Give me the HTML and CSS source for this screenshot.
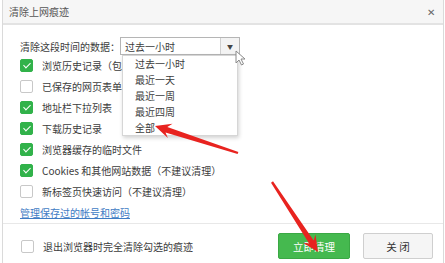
FILE: index.html
```html
<!DOCTYPE html>
<html>
    <head>
        <title>清除上网痕迹</title>
        <link rel="stylesheet" href="styles.css">
    </head>
    <body>
        <div class="dialog">
            <div class="title_bar">
                <span class="title">清除上网痕迹</span>
                <span class="close">&#x2715;</span>
            </div>
            <div class="content">
                <div class="range_row">
                    <span class="range_label">清除这段时间的数据：</span>
                    <div class="select">
                        <span class="select_text">过去一小时</span>
                        <span class="select_btn">&#x25BC;</span>
                    </div>
                </div>
                <div class="check_row"><span class="box on"></span>浏览历史记录（包括地址栏输入记录）</div>
                <div class="check_row"><span class="box"></span>已保存的网页表单单数据</div>
                <div class="check_row"><span class="box on"></span>地址栏下拉列表</div>
                <div class="check_row"><span class="box on"></span>下载历史记录</div>
                <div class="check_row"><span class="box on"></span>浏览器缓存的临时文件</div>
                <div class="check_row"><span class="box on"></span>Cookies 和其他网站数据（不建议清理）</div>
                <div class="check_row"><span class="box"></span>新标签页快速访问（不建议清理）</div>
                <div class="link_row"><a class="link" href="#">管理保存过的帐号和密码</a></div>
            </div>
            <div class="footer">
                <div class="check_row"><span class="box"></span>退出浏览器时完全清除勾选的痕迹</div>
                <div class="buttons">
                    <span class="btn btn_green">立即清理</span>
                    <span class="btn btn_gray">关 闭</span>
                </div>
            </div>
        </div>

        <!-- open dropdown list -->
        <div class="dropdown">
            <div class="item">过去一小时</div>
            <div class="item">最近一天</div>
            <div class="item">最近一周</div>
            <div class="item">最近四周</div>
            <div class="item">全部</div>
        </div>

        <svg class="cursor" width="12" height="16" viewBox="0 0 12 16">
            <path d="M1 1 L1 13 L4 10 L6.5 15 L8.5 14 L6 9 L10 9 Z" fill="#fff" stroke="#8a8a8a" stroke-width="1"/>
        </svg>

        <svg class="arrows" width="445" height="263" viewBox="0 0 445 263">
            <polygon fill="#e8231f" points="155,126 172.5,123.8 167.3,127 238.4,151.9 237.6,154.1 165.5,132.4 167.9,138"/>
            <polygon fill="#e8231f" points="318,252 315.5,234.5 313.7,240.5 273,181.3 271,182.7 309.1,243.5 302.9,242.7"/>
        </svg>
    </body>
</html>
```

FILE: styles.css
```css
html, body {
	margin: 0;
	padding: 0;
}
body {
	width: 445px;
	height: 263px;
	overflow: hidden;
	background: #fff;
	position: relative;
	font-family: "Noto Sans CJK SC", "Microsoft YaHei", sans-serif;
	font-size: 10px;
	color: #3c3c3c;
}
.dialog {
	margin: 0 1px 0 2px;
	border-left: 1px solid #dadada;
	border-right: 1px solid #dadada;
	height: 263px;
	box-sizing: border-box;
}
.title_bar {
	height: 23px;
	background: #f6f6f6;
	border-bottom: 2px solid #e3e3e3;
	display: flex;
	align-items: center;
	justify-content: space-between;
	padding: 0 8px 0 6px;
}
.title {
	color: #555;
}
.close {
	color: #666;
	font-size: 10px;
}
.content {
	padding: 12px 0 0 17px;
}
.range_row {
	display: flex;
	align-items: center;
	height: 18px;
}
.range_label {
	width: 100px;
}
.select {
	width: 118px;
	height: 16px;
	border: 1px solid #b5b5b5;
	display: flex;
	align-items: center;
	justify-content: space-between;
}
.select_text {
	padding-left: 4px;
}
.select_btn {
	width: 18px;
	height: 16px;
	border-left: 1px solid #d0d0d0;
	background: #f3f3f3;
	font-size: 6px;
	color: #444;
	display: flex;
	align-items: center;
	justify-content: center;
}
.check_row {
	height: 21px;
	display: flex;
	align-items: center;
	white-space: nowrap;
}
.box {
	width: 13px;
	height: 13px;
	box-sizing: border-box;
	border: 1px solid #c8c8c8;
	border-radius: 2px;
	background: #fff;
	margin-right: 9px;
	position: relative;
}
.box.on {
	background: #31b24a;
	border-color: #31b24a;
}
.box.on::after {
	content: "";
	position: absolute;
	left: 3.5px;
	top: 1px;
	width: 3px;
	height: 6px;
	border-right: 1.5px solid #fff;
	border-bottom: 1.5px solid #fff;
	transform: rotate(45deg);
}
.link_row {
	height: 21px;
	display: flex;
	align-items: center;
}
.link {
	color: #3f7cc4;
	text-decoration: underline;
}
.footer {
	border-top: 1px solid #e8e8e8;
	padding: 9px 10px 0 18px;
	display: flex;
	justify-content: space-between;
}
.footer .check_row {
	height: 26px;
}
.buttons {
	display: flex;
	gap: 13px;
}
.btn {
	width: 72px;
	height: 26px;
	box-sizing: border-box;
	border-radius: 2px;
	display: flex;
	align-items: center;
	justify-content: center;
	font-size: 10.5px;
}
.btn_green {
	background: #45b94f;
	border: 1px solid #3aa844;
	color: #fff;
}
.btn_gray {
	width: 70px;
	background: #f5f5f5;
	border: 1px solid #cfcfcf;
	color: #333;
}
.dropdown {
	position: absolute;
	left: 122px;
	top: 55px;
	width: 116px;
	height: 81px;
	box-sizing: border-box;
	background: #fff;
	border: 1px solid #d6d6d6;
	box-shadow: 1px 2px 4px rgba(0, 0, 0, 0.18);
}
.item {
	height: 16px;
	line-height: 16px;
	padding-left: 12px;
	color: #3c3c3c;
}
.cursor {
	position: absolute;
	left: 235px;
	top: 50px;
}
.arrows {
	position: absolute;
	left: 0;
	top: 0;
	pointer-events: none;
}
```
